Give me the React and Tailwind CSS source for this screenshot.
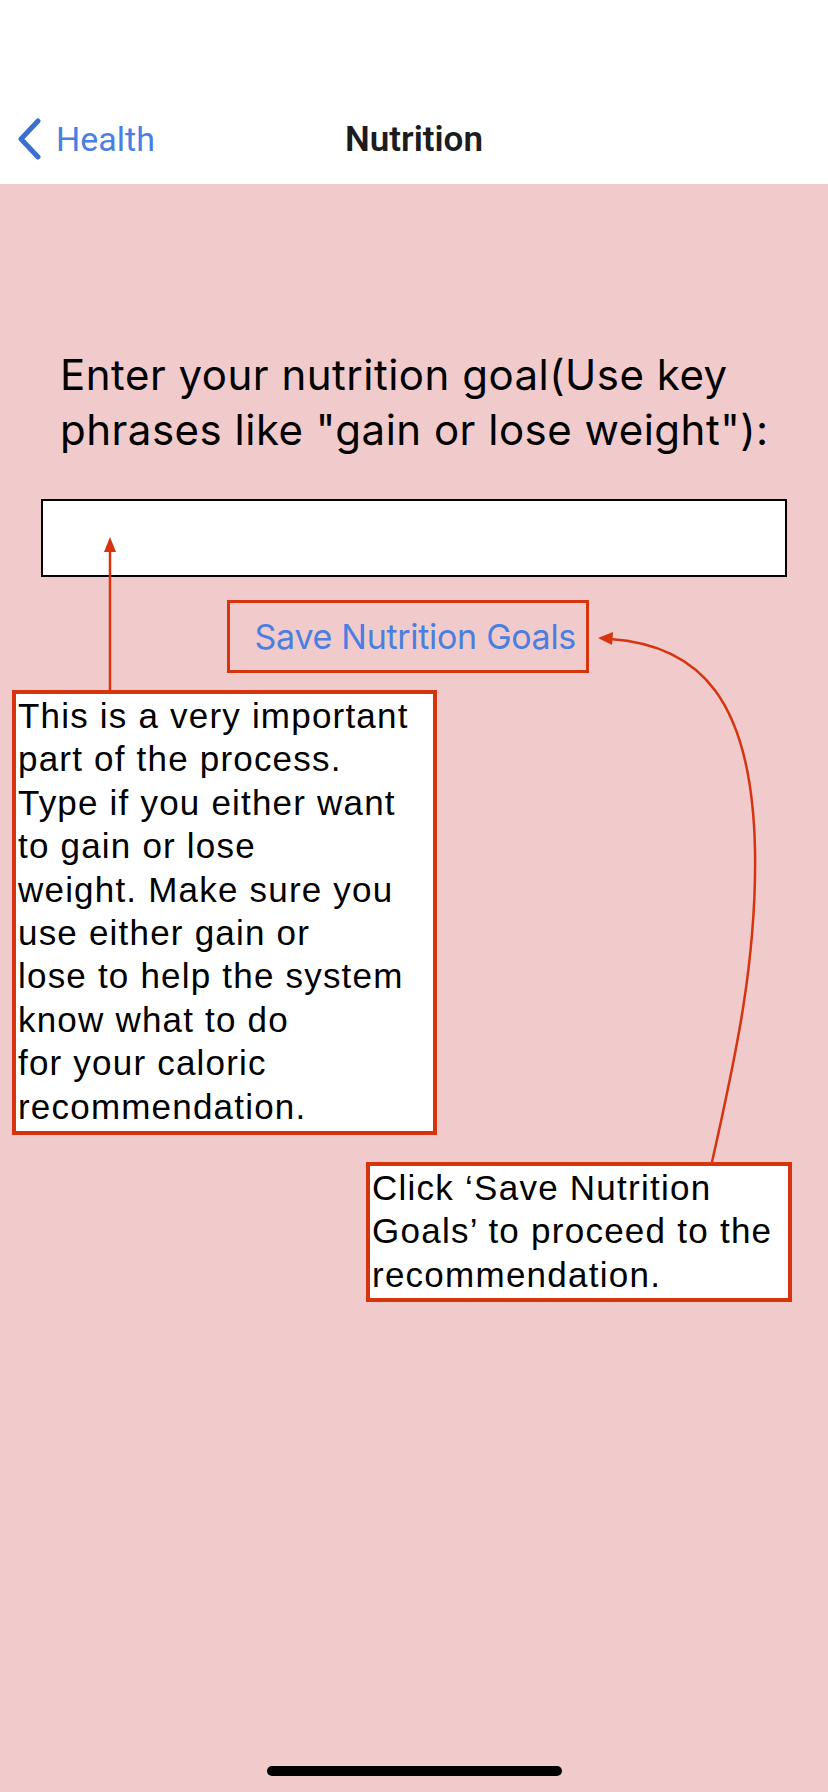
const Chevron = () => (
    <svg width="26" height="42" viewBox="0 0 26 42" fill="none">
        <path d="M22 3 L5 21 L22 39" stroke="#3a6fd0" strokeWidth="5" strokeLinecap="round" strokeLinejoin="round" />
    </svg>
)

const Arrows = () => (
    <svg className="absolute inset-0 pointer-events-none" width="828" height="1792" viewBox="0 0 828 1792" fill="none">
        {/* input arrow */}
        <line x1="110" y1="690" x2="110" y2="550" stroke="#d6330f" strokeWidth="2.5" />
        <polygon points="110,537 104,552 116,552" fill="#d6330f" />
        {/* save button arrow */}
        <path d="M712 1162 C735 1060, 757 960, 755 850 C752 700, 700 645, 610 639" stroke="#d6330f" strokeWidth="2.5" fill="none" />
        <polygon points="598,638 613,632 612,645" fill="#d6330f" />
    </svg>
)

const App = () => {
    return (
        <div className="relative w-[828px] h-[1792px] flex flex-col bg-[#f1cbcb] overflow-hidden" style={{ fontFamily: 'Roboto, "Liberation Sans", sans-serif' }}>
            <header className="h-[184px] bg-white flex items-end pb-[24px] relative">
                <div className="flex items-center gap-[14px] pl-[16px] h-[42px]">
                    <Chevron />
                    <span className="text-[34px] text-[#4a7ee0] leading-none">Health</span>
                </div>
                <h1 className="absolute left-0 right-0 bottom-[24px] h-[42px] flex items-center justify-center text-[35px] font-semibold text-[#1c1c1e] leading-none">Nutrition</h1>
            </header>

            <main className="flex flex-col">
                <p className="mt-[163px] ml-[60px] text-[42px] leading-[55px] text-black tracking-[0.5px]" style={{ fontFamily: 'Inter, sans-serif' }}>
                    Enter your nutrition goal(Use key<br />phrases like "gain or lose weight"):
                </p>

                <input className="mt-[42px] ml-[41px] w-[746px] h-[78px] bg-white border-2 border-black outline-none" />

                <button className="mt-[23px] ml-[227px] w-[362px] h-[73px] border-[3px] border-[#d6330f] flex items-center justify-end pr-[10px] text-[34px] text-[#4a7ee0] tracking-[-0.3px]" style={{ fontFamily: 'Inter, sans-serif' }}>
                    Save Nutrition Goals
                </button>

                <div className="mt-[17px] ml-[12px] w-[425px] h-[445px] bg-white border-4 border-[#d6330f] pl-[2px] text-[35px] leading-[43.4px] tracking-[1.2px] text-black" style={{ fontFamily: '"Liberation Sans", Arial, sans-serif' }}>
                    This is a very important<br />
                    part of the process.<br />
                    Type if you either want<br />
                    to gain or lose<br />
                    weight. Make sure you<br />
                    use either gain or<br />
                    lose to help the system<br />
                    know what to do<br />
                    for your caloric<br />
                    recommendation.
                </div>

                <div className="mt-[27px] ml-[366px] w-[426px] h-[140px] bg-white border-4 border-[#d6330f] pl-[2px] text-[35px] leading-[43.4px] tracking-[1.25px] text-black" style={{ fontFamily: '"Liberation Sans", Arial, sans-serif' }}>
                    Click ‘Save Nutrition<br />
                    Goals’ to proceed to the<br />
                    recommendation.
                </div>
            </main>

            <div className="mt-auto mb-[16px] mx-auto w-[295px] h-[10px] rounded-full bg-black" />

            <Arrows />
        </div>
    )
}

export default App
